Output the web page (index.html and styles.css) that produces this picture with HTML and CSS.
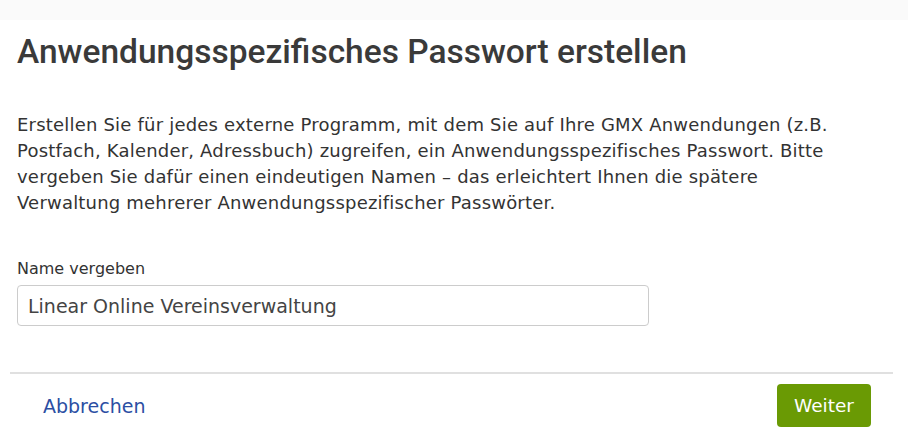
FILE: index.html
```html
<!DOCTYPE html>
<html lang="de">
<head>
<meta charset="utf-8">
<link rel="stylesheet" href="styles.css">
</head>
<body>
<div class="topband"></div>
<main class="dialog">
  <h1 class="title">Anwendungsspezifisches Passwort erstellen</h1>
  <p class="intro">Erstellen Sie für jedes externe Programm, mit dem Sie auf Ihre GMX Anwendungen (z.B. Postfach, Kalender, Adressbuch) zugreifen, ein Anwendungsspezifisches Passwort. Bitte vergeben Sie dafür einen eindeutigen Namen – das erleichtert Ihnen die spätere Verwaltung mehrerer Anwendungsspezifischer Passwörter.</p>
  <label class="label" for="name">Name vergeben</label>
  <input class="field" id="name" type="text" value="Linear Online Vereinsverwaltung">
  <div class="footer">
    <a class="cancel" href="#">Abbrechen</a>
    <button class="next" type="button">Weiter</button>
  </div>
</main>
</body>
</html>
```
FILE: styles.css
```css
html, body {
  margin: 0;
  padding: 0;
  background: #ffffff;
}
body {
  font-family: "DejaVu Sans", Verdana, sans-serif;
  color: #333333;
}
.topband {
  height: 20px;
  background: #fafafa;
}
.dialog {
  padding: 0 15px 0 10px;
  display: flex;
  flex-direction: column;
}
.title {
  margin: 12px 0 0 7px;
  font-family: Roboto, "Liberation Sans", sans-serif;
  font-weight: 500;
  font-size: 33.5px;
  line-height: 40px;
  color: #3a3a3a;
}
.intro {
  margin: 40px 0 0 7px;
  max-width: 840px;
  font-size: 18px;
  letter-spacing: 0.2px;
  line-height: 26px;
  color: #333333;
}
.label {
  margin: 44px 0 0 7px;
  font-size: 16px;
  line-height: 18px;
  color: #333333;
}
.field {
  margin: 7px 0 0 7px;
  width: 632px;
  height: 41px;
  box-sizing: border-box;
  border: 1px solid #cccccc;
  border-radius: 4px;
  padding: 0 10px;
  font-family: "DejaVu Sans", Verdana, sans-serif;
  font-size: 19px;
  color: #444444;
  background: #ffffff;
}
.footer {
  margin-top: 46px;
  border-top: 2px solid #e0e0e0;
  display: flex;
  justify-content: space-between;
  align-items: center;
  padding: 10px 22px 0 33px;
}
.cancel {
  font-size: 19px;
  color: #2b4ea3;
  text-decoration: none;
}
.next {
  height: 43px;
  width: 94px;
  padding: 0;
  border: none;
  border-radius: 4px;
  background: #6a9a04;
  color: #ffffff;
  font-family: "DejaVu Sans", Verdana, sans-serif;
  font-size: 18.5px;
}
```
